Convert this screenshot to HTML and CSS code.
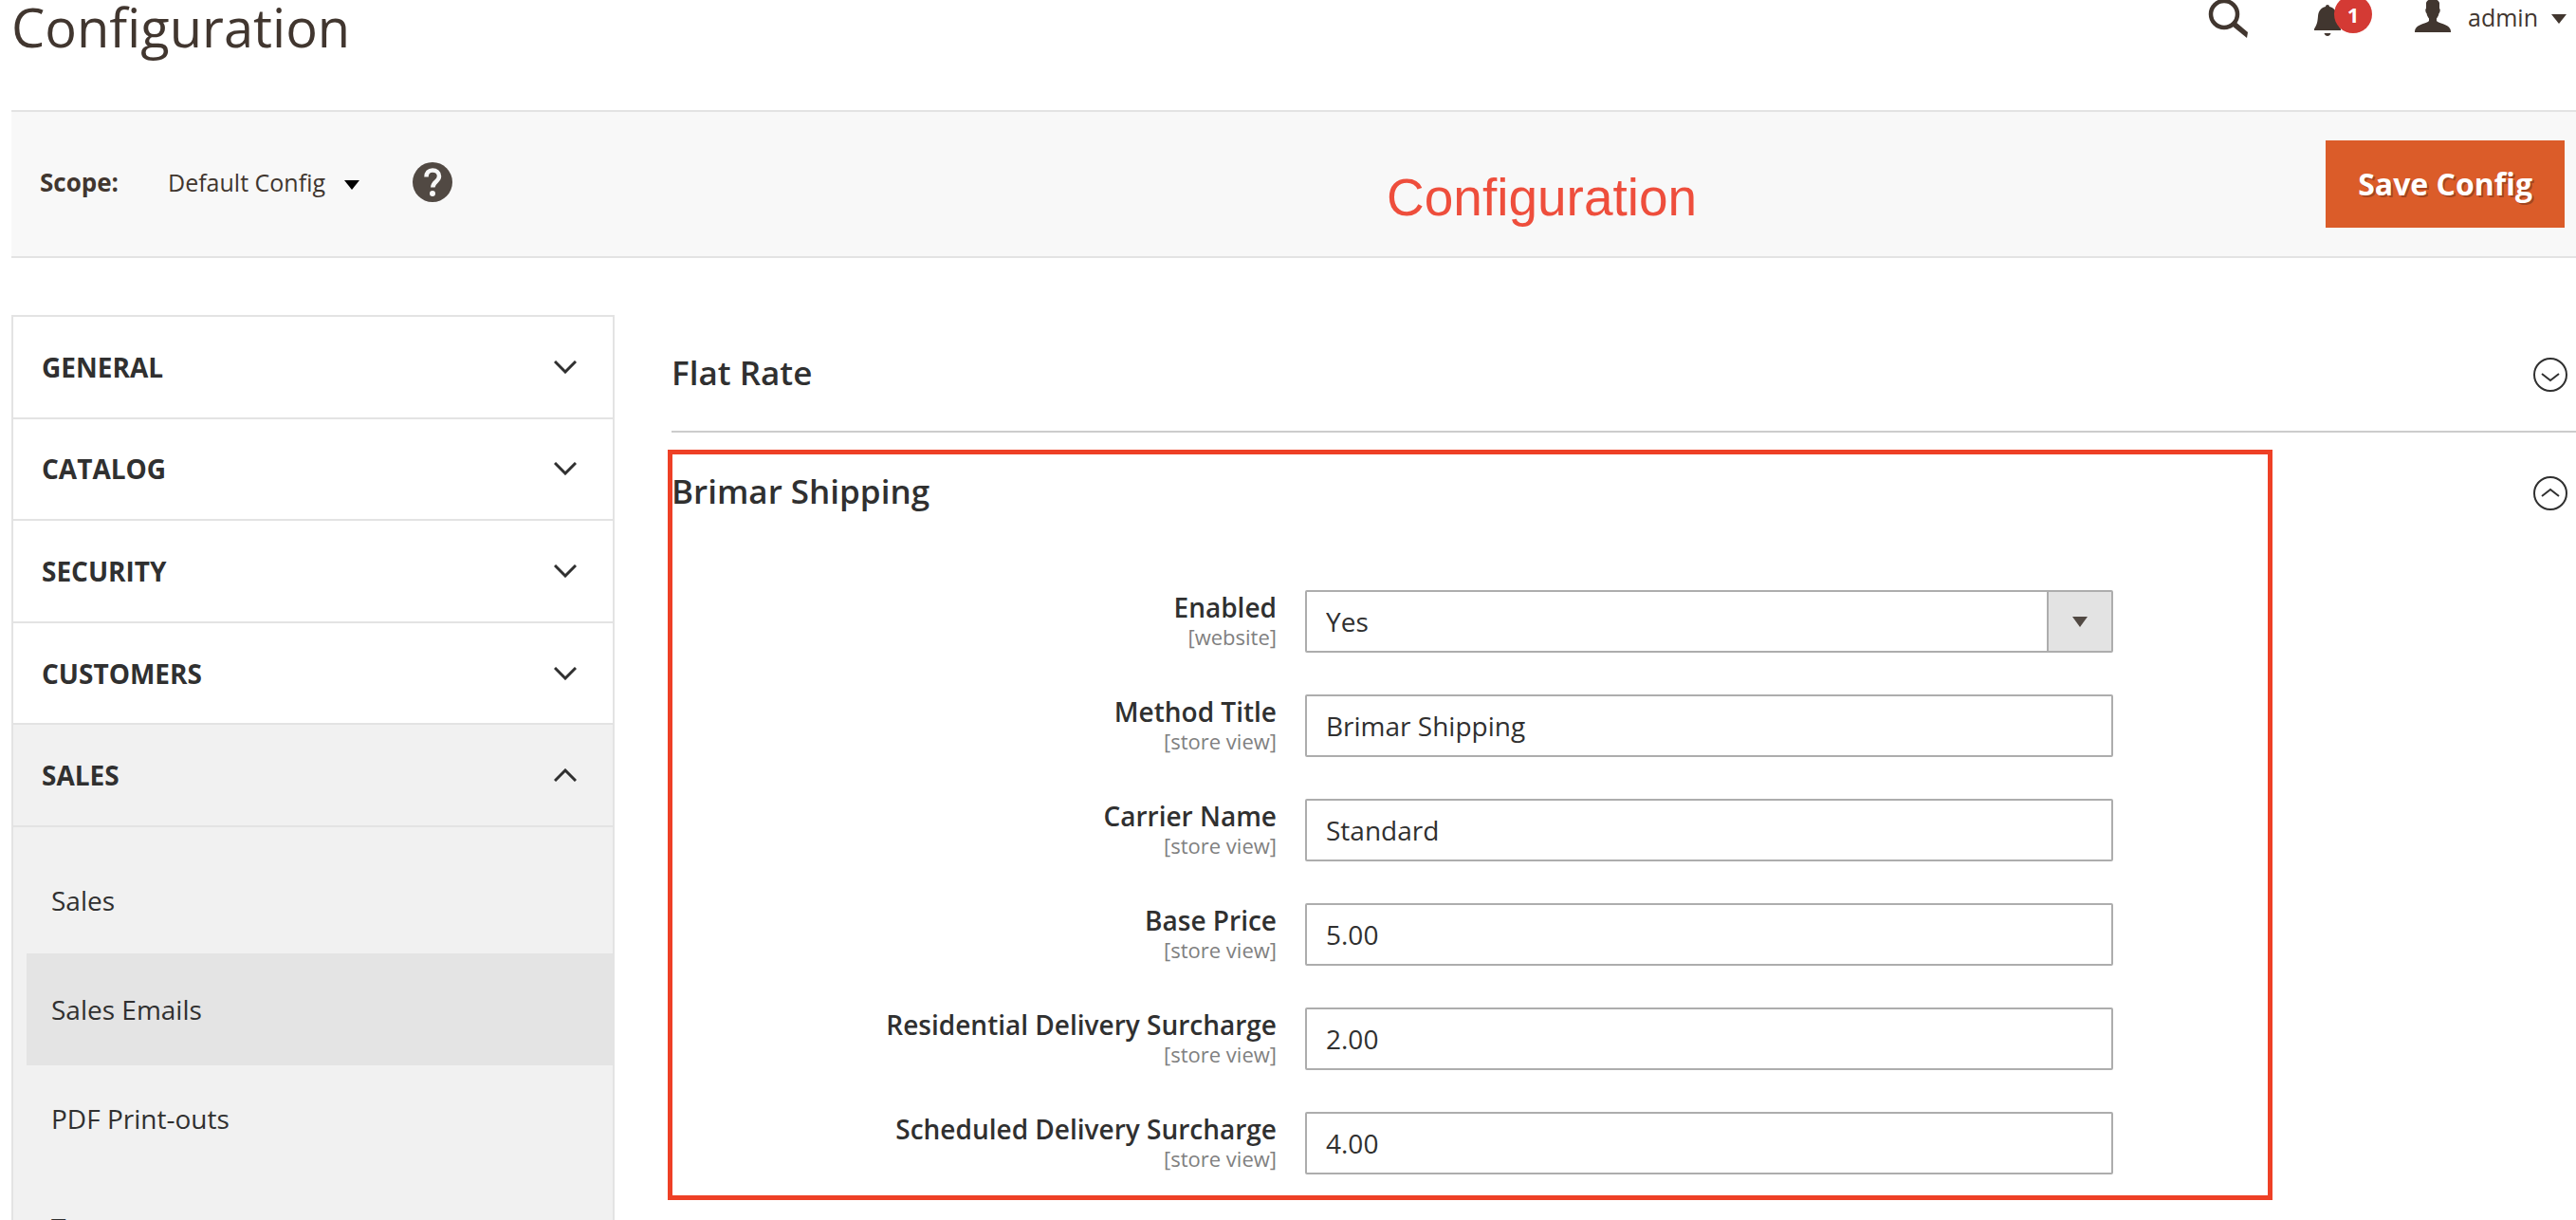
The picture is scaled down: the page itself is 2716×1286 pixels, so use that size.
FILE: index.html
```html
<!DOCTYPE html>
<html lang="en">
<head>
<meta charset="utf-8">
<title>Configuration</title>
<link rel="stylesheet" href="styles.css">
</head>
<body>
<div class="page">
  <header class="page-header">
    <h1 class="page-title">Configuration</h1>
    <div class="header-tools">
      <button class="tool tool-search" type="button" aria-label="Search">
        <svg width="44" height="40" viewBox="0 0 44 40"><circle cx="17" cy="15" r="14" fill="none" stroke="#41362f" stroke-width="4.500"/><path d="M25 27L29 23L42 34L41 40Z" fill="#41362f"/></svg>
      </button>
      <button class="tool tool-bell" type="button" aria-label="Notifications">
        <svg width="30" height="40" viewBox="0 0 30 40"><path d="M15 5c1.200 0 2 .8 2 1.900 5 1.300 7.500 4.500 8 10.100.5 6 1 9 4 13.500v1.500H1v-1.500c3-4.500 3.500-7.500 4-13.500.5-5.600 3-8.800 8-10.100C13 5.800 13.800 5 15 5zM11.500 35h7c-.5 2-2 3-3.500 3s-3-1-3.500-3z" fill="#41362f"/></svg>
        <span class="badge">1</span>
      </button>
      <button class="tool account" type="button">
        <svg width="38" height="34" viewBox="0 0 38 34"><path d="M12 3C13 0 16-1 19-1s6 1 7 4v6c1 0 1 4-.5 5-.5 3-1.500 4-2.500 5.500V22c2 2.500 12 3.500 14 8 1 1.500 1 3 1 4H0c0-1 0-2.500 1-4 2-4.500 12-5.500 14-8v-2.500C14 18 13 17 12.500 14 11 13 11 9 12 9z" fill="#41362f"/></svg>
        <span>admin</span>
        <svg class="caret" width="16" height="10" viewBox="0 0 16 10"><path d="M0 0H16L8 10Z" fill="#41362f"/></svg>
      </button>
    </div>
  </header>

  <div class="toolbar">
    <div class="scope">
      <span class="scope-label" id="scope-label">Scope:</span>
      <button class="scope-switch" type="button" aria-describedby="scope-label">
        <span>Default Config</span>
        <svg class="scope-caret" width="16" height="10" viewBox="0 0 16 10"><path d="M0 0H16L8 10Z" fill="#000"/></svg>
      </button>
      <a class="help" href="#help" aria-label="Help">
        <svg width="42" height="42" viewBox="0 0 42 42"><circle cx="21" cy="21" r="21" fill="#514943"/><path d="M14.500 15.500C14.500 11 17 8.500 21 8.500s7 2.500 7 6.300c0 5.700-6.700 5.700-6.700 11.700" fill="none" stroke="#f8f8f8" stroke-width="4.500"/><circle cx="21" cy="33" r="3" fill="#f8f8f8"/></svg>
      </a>
    </div>
    <span class="note">Configuration</span>
    <button class="save" type="submit" form="shipping">Save Config</button>
  </div>

  <div class="columns">
    <nav class="side" aria-label="Configuration sections">
      <div class="side-tabs">
        <button class="side-tab" type="button" aria-expanded="false">GENERAL <svg width="24" height="14" viewBox="0 0 24 14"><path class="line" d="M1 1L12 12L23 1"/></svg></button>
        <button class="side-tab" type="button" aria-expanded="false">CATALOG <svg width="24" height="14" viewBox="0 0 24 14"><path class="line" d="M1 1L12 12L23 1"/></svg></button>
        <button class="side-tab" type="button" aria-expanded="false">SECURITY <svg width="24" height="14" viewBox="0 0 24 14"><path class="line" d="M1 1L12 12L23 1"/></svg></button>
        <button class="side-tab" type="button" aria-expanded="false">CUSTOMERS <svg width="24" height="14" viewBox="0 0 24 14"><path class="line" d="M1 1L12 12L23 1"/></svg></button>
        <button class="side-tab side-tab-open" type="button" aria-expanded="true">SALES <svg width="24" height="14" viewBox="0 0 24 14"><path class="line" d="M1 13L12 2L23 13"/></svg></button>
      </div>
      <ul class="side-list">
        <li><a href="#sales">Sales</a></li>
        <li><a class="current" href="#emails">Sales Emails</a></li>
        <li><a href="#pdf">PDF Print-outs</a></li>
        <li><a href="#tax">Tax</a></li>
      </ul>
    </nav>

    <main class="content">
      <section class="group group-closed">
        <h2 class="group-title">Flat Rate</h2>
        <button class="toggle" type="button" aria-label="Expand Flat Rate" aria-expanded="false"><svg width="36" height="36" viewBox="0 0 36 36"><circle class="thin" cx="18" cy="18" r="17"/><path class="thin" d="M9 17L18 24L27 17"/></svg></button>
      </section>
      <section class="highlighted">
        <div class="group">
          <h2 class="group-title">Brimar Shipping</h2>
          <button class="toggle" type="button" aria-label="Collapse Brimar Shipping" aria-expanded="true"><svg width="36" height="36" viewBox="0 0 36 36"><circle class="thin" cx="18" cy="18" r="17"/><path class="thin" d="M9 21L18 14L27 21"/></svg></button>
        </div>
        <form class="fields" id="shipping">
          <div class="field"><label for="enabled">Enabled<small>[website]</small></label>
            <div class="select"><select id="enabled"><option>Yes</option><option>No</option></select><span class="select-arrow"><svg width="16" height="11" viewBox="0 0 16 11"><path d="M0 0H16L8 11Z" fill="#514943"/></svg></span></div></div>
          <div class="field"><label for="title">Method Title<small>[store view]</small></label><input id="title" type="text" value="Brimar Shipping"></div>
          <div class="field"><label for="name">Carrier Name<small>[store view]</small></label><input id="name" type="text" value="Standard"></div>
          <div class="field"><label for="price">Base Price<small>[store view]</small></label><input id="price" type="text" value="5.00"></div>
          <div class="field"><label for="residential">Residential Delivery Surcharge<small>[store view]</small></label><input id="residential" type="text" value="2.00"></div>
          <div class="field"><label for="scheduled">Scheduled Delivery Surcharge<small>[store view]</small></label><input id="scheduled" type="text" value="4.00"></div>
        </form>
        <div class="frame"></div>
      </section>
    </main>
  </div>
</div>
</body>
</html>
```
FILE: styles.css
```css
* { box-sizing: border-box; }

body {
  margin: 0;
  background: #fff;
  color: #303030;
  font-family: "Open Sans", "Noto Sans", sans-serif;
  font-size: 28px;
  line-height: 38px;
}

button, input, select { font: inherit; color: inherit; }
button { border: 0; padding: 0; background: none; cursor: pointer; }
svg { display: block; flex: none; }
a { color: inherit; text-decoration: none; }
h1, h2, ul { margin: 0; padding: 0; }

.page {
  height: 100vh;
  overflow: hidden;
  padding-left: 12px;
}

/* Header */
.page-header {
  display: flex;
  justify-content: space-between;
  align-items: flex-start;
  padding-right: 10px;
  height: 116px;
  color: #41362f;
}
.page-title { font-size: 56px; line-height: 56px; font-weight: 400; }
.header-tools { display: flex; align-items: flex-start; }
.tool-search { margin-right: 67px; }
.tool-bell { position: relative; margin-right: 77px; }
.badge {
  position: absolute;
  left: 22px;
  top: -5px;
  width: 40px;
  height: 40px;
  border-radius: 50%;
  background: #d43a34;
  color: #fff;
  font-size: 22px;
  font-weight: 700;
  line-height: 40px;
}
.account { display: flex; font-size: 25px; line-height: 36px; }
.account span { margin: 0 14px 0 18px; }
.caret { margin-top: 15px; }

/* Scope bar */
.toolbar {
  position: relative;
  display: flex;
  align-items: center;
  height: 156px;
  padding: 0 12px 0 30px;
  border: solid #e3e3e3;
  border-width: 2px 0;
  background: #f8f8f8;
  color: #41362f;
}
.scope { display: flex; align-items: center; padding-bottom: 4px; }
.scope-label { font-size: 26px; font-weight: 700; }
.scope-switch { display: flex; align-items: center; gap: 20px; margin-left: 52px; font-size: 25px; }
.scope-caret { margin-top: 6px; }
.help { margin-left: 56px; }
.note {
  position: absolute;
  left: 1450px;
  top: 58px;
  color: #ee4e3c;
  font: 55px/64px "Liberation Sans", Arial, sans-serif;
}
.save {
  margin-left: auto;
  padding: 0 34px;
  height: 92px;
  background: #db5c29;
  color: #fff;
  font-size: 32px;
  font-weight: 700;
  text-shadow: 2px 2px 0 rgba(0, 0, 0, .25);
}

/* Columns */
.columns { display: flex; align-items: flex-start; gap: 60px; padding-top: 60px; }
.side { flex: none; width: 636px; border: 2px solid #e3e3e3; background: #f1f1f1; }
.side-tabs { display: grid; grid-auto-rows: 1fr; height: 538px; }
.side-tab {
  display: flex;
  justify-content: space-between;
  align-items: center;
  padding: 0 38px 0 30px;
  border-bottom: 2px solid #e3e3e3;
  background: #fff;
  font-weight: 700;
}
.side-tab-open { background: #f1f1f1; }
.line { fill: none; stroke: #303030; stroke-width: 3; }
.side-list { list-style: none; padding: 18px 0 18px 14px; }
.side-list li + li { margin-top: -3px; }
.side-list a { display: block; padding: 40px 26px; line-height: 38px; }
.side-list .current { background: #e4e4e4; }

.content { flex: 1; }
.group {
  display: flex;
  justify-content: space-between;
  align-items: center;
  height: 124px;
  padding-right: 9px;
}
.group-closed { border-bottom: 2px solid #ccc; }
.group-title { font-size: 35px; line-height: 46px; font-weight: 600; }
.toggle { margin-top: 4px; }
.thin { fill: none; stroke: #303030; stroke-width: 2; }
.highlighted { position: relative; }
.frame {
  position: absolute;
  top: 18px;
  bottom: -27px;
  left: -4px;
  right: 320px;
  border: 5px solid #ee4026;
  pointer-events: none;
}

/* Form */
.fields { display: grid; gap: 44px; padding-top: 42px; }
.field { display: grid; grid-template-columns: 638fr 852fr 458fr; column-gap: 30px; }
.field label { text-align: right; font-weight: 600; line-height: 36px; }
.field small { display: block; color: #808080; font-size: 22px; font-weight: 400; line-height: 26px; }
.field input, .field select {
  width: 100%;
  height: 66px;
  padding: 0 20px;
  border: 2px solid #adadad;
  border-radius: 2px;
  background: #fff;
}
.field select { appearance: none; }
.select { position: relative; }
.select-arrow {
  position: absolute;
  top: 2px;
  right: 2px;
  bottom: 2px;
  display: flex;
  align-items: center;
  justify-content: center;
  width: 68px;
  border-left: 2px solid #adadad;
  background: #e3e3e3;
  pointer-events: none;
}
```
